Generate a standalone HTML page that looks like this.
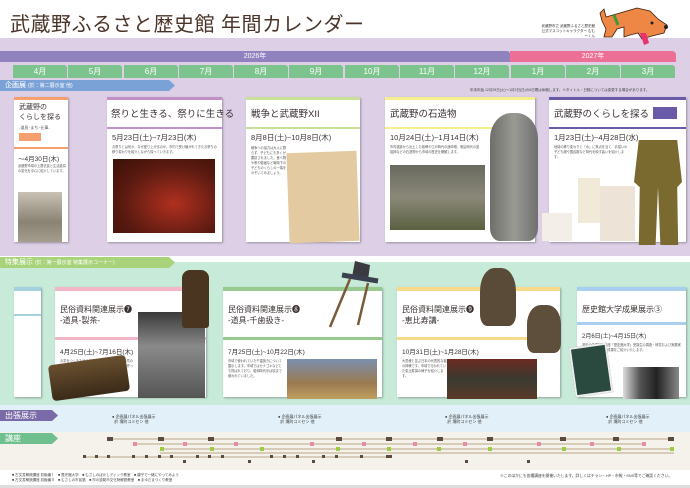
<!DOCTYPE html>
<html><head><meta charset="utf-8"><style>
*{margin:0;padding:0;box-sizing:border-box}
body{width:690px;height:488px;overflow:hidden;background:#fff;font-family:"Liberation Sans","Noto Sans CJK JP",sans-serif;position:relative;color:#3a2e2a}
.a{position:absolute}
.card{position:absolute;background:#fff;box-shadow:1px 1px 2px rgba(0,0,0,.3)}
.t{position:absolute;font-size:9.5px;color:#3a3030;white-space:nowrap}
.d{position:absolute;font-size:7.5px;color:#3a3030;white-space:nowrap}
.s{position:absolute;font-size:3.2px;line-height:5px;color:#555}
.m{position:absolute;top:65px;height:13px;width:54px;background:#7cc38d;color:#fff;font-size:8px;text-align:center;line-height:13px;border-radius:0 3px 0 0}
.lab{position:absolute;height:11px;color:#fff;font-size:7px;line-height:11px;padding-left:5px;clip-path:polygon(0 0,calc(100% - 6px) 0,100% 50%,calc(100% - 6px) 100%,0 100%)}
</style></head><body>
<div class="a" style="left:10px;top:8px;font-size:20px;color:#4a3328;letter-spacing:0.5px;white-space:nowrap">武蔵野ふるさと歴史館 年間カレンダー</div>
<div class="a" style="left:540px;top:24px;font-size:3.5px;color:#333;line-height:5px;text-align:right;width:55px">武蔵野市立 武蔵野ふるさと歴史館<br>公式マスコットキャラクター むむーくん</div>
<div class="a" style="left:0;top:38px;width:690px;height:218px;background:#dccfe6"></div>
<div class="a" style="left:0;top:256px;width:690px;height:6px;background:#fff"></div>
<div class="a" style="left:0;top:262px;width:690px;height:143px;background:#c7ead9"></div>
<div class="a" style="left:0;top:405px;width:690px;height:27px;background:#e2f1f9"></div>
<div class="a" style="left:0;top:432px;width:690px;height:38px;background:#f5f2ec"></div>
<svg class="a" style="left:592px;top:3px" width="80" height="44" viewBox="0 0 80 44">
<path d="M8 10 L12 6 L14 14 L28 10 L45 5 L58 8 L66 16 L75 22 L72 30 L60 33 L50 36 L46 30 L38 32 L32 34 L32 24 L25 26 L20 34 L12 34 L14 26 L10 18 Z" fill="#ee8745" stroke="#3a2010" stroke-width="0.8"/>
<path d="M22 12 L26 22" stroke="#3a9a3a" stroke-width="3"/>
<path d="M48 30 L52 42 L57 40 L54 30 Z" fill="#e8336e"/>
<circle cx="60" cy="20" r="1.5" fill="#222"/><circle cx="74" cy="24" r="2" fill="#222"/>
</svg>
<div class="a" style="left:0;top:51px;width:510px;height:11px;background:#9081bf;color:#fff;font-size:7px;text-align:center;line-height:11px;border-radius:0 3px 0 0">2026年</div>
<div class="a" style="left:510px;top:51px;width:166px;height:11px;background:#ec6f95;color:#fff;font-size:7px;text-align:center;line-height:11px;border-radius:0 4px 0 0">2027年</div>
<div class="m" style="left:13px">4月</div><div class="m" style="left:68px">5月</div><div class="m" style="left:124px">6月</div><div class="m" style="left:179px">7月</div><div class="m" style="left:234px">8月</div><div class="m" style="left:289px">9月</div><div class="m" style="left:345px">10月</div><div class="m" style="left:400px">11月</div><div class="m" style="left:455px">12月</div><div class="m" style="left:511px">1月</div><div class="m" style="left:566px">2月</div><div class="m" style="left:621px">3月</div>
<div class="lab" style="left:0;top:80px;width:175px;background:#7ba2d6">企画展 <span style="font-size:5px">(於：第二展示室 他)</span></div>
<div class="a" style="left:470px;top:88px;font-size:3.5px;color:#444;white-space:nowrap">年末年始 12月29日(火)〜1月3日(日)の6日間は休館します。※タイトル・日程については変更する場合があります。</div>
<div class="card" style="left:14px;top:97px;width:54px;height:145px;border-top:3px solid #f5a06e">
 <div class="t" style="left:5px;top:3px;font-size:7px;line-height:10px">武蔵野の<br>くらしを探る</div>
 <div class="s" style="left:5px;top:25px;font-size:4px">-道具･まち･仕事-</div>
 <div class="a" style="left:5px;top:33px;width:22px;height:8px;background:#f5a06e"></div>
 <div class="a" style="left:0;top:47px;width:54px;height:2px;background:#f5a06e"></div>
 <div class="d" style="left:4px;top:53px;font-size:6.5px">〜4月30日(木)</div>
 <div class="s" style="left:4px;top:64px;width:48px">武蔵野市域の上層农民と生活道具の変化を中心に紹介しています。</div>
 <div class="a" style="left:4px;top:92px;width:44px;height:50px;background:linear-gradient(#c9c2b4,#8a8273 60%,#a59d8d)"></div>
</div>
<div class="card" style="left:107px;top:97px;width:115px;height:145px;border-top:3px solid #c290c6">
 <div class="t" style="left:4px;top:6px">祭りと生きる、祭りに生きる</div>
 <div class="a" style="left:0;top:27px;width:115px;height:2px;background:#c290c6"></div>
 <div class="d" style="left:5px;top:32px">5月23日(土)~7月23日(木)</div>
 <div class="s" style="left:5px;top:45px;width:105px">お祭りとは何か、なぜ盛り上がるのか。市内で受け継がれてきたお祭りの移り変わりを紹介しながら探っていきます。</div>
 <div class="a" style="left:6px;top:59px;width:102px;height:74px;background:radial-gradient(ellipse at 60% 60%,#b03020,#5a1a10 60%,#3a1008)"></div>
</div>
<div class="card" style="left:246px;top:97px;width:114px;height:145px;border-top:3px solid #c8e09a">
 <div class="t" style="left:5px;top:6px">戦争と武蔵野XII</div>
 <div class="a" style="left:0;top:27px;width:114px;height:2px;background:#c8e09a"></div>
 <div class="d" style="left:5px;top:32px">8月8日(土)~10月8日(木)</div>
 <div class="s" style="left:5px;top:46px;width:36px">戦争への協力は大人に限らず、子どもにも多くが要請されました。食べ物や歌や動画など戦時下の子どものくらしの一端をのぞいてみましょう。</div>
 <div class="a" style="left:42px;top:52px;width:70px;height:90px;background:#e4caa0;transform:rotate(-2deg)"></div>
</div>
<div class="card" style="left:385px;top:97px;width:150px;height:145px;border-top:3px solid #f5ef8e">
 <div class="t" style="left:5px;top:6px">武蔵野の石造物</div>
 <div class="a" style="left:0;top:27px;width:150px;height:2px;background:#f5ef8e"></div>
 <div class="d" style="left:5px;top:32px">10月24日(土)~1月14日(木)</div>
 <div class="s" style="left:5px;top:45px;width:90px">市内遺跡から出土した板碑や江戸時代の庚申塔、明治時代の道祖神などの石造物から市域の歴史を概観します。</div>
 <div class="a" style="left:5px;top:65px;width:95px;height:65px;background:linear-gradient(#6a6a60,#8a8878 50%,#5a6040)"></div>
</div>
<div class="a" style="left:490px;top:113px;width:48px;height:128px;background:linear-gradient(90deg,#6e6e6a,#9a9a94,#707070);border-radius:45% 45% 20% 20%/20% 20% 10% 10%"></div>
<div class="card" style="left:549px;top:97px;width:137px;height:145px;border-top:3px solid #6a5ba8">
 <div class="t" style="left:5px;top:6px">武蔵野のくらしを探る</div>
 <div class="a" style="left:104px;top:7px;width:24px;height:12px;background:#6a5ba8"></div>
 <div class="a" style="left:0;top:27px;width:137px;height:2px;background:#6a5ba8"></div>
 <div class="d" style="left:5px;top:32px">1月23日(土)~4月28日(水)</div>
 <div class="s" style="left:5px;top:45px;width:75px">地域の移り変わりと「水」に焦点を当て、手描いの子ども服や国民服など時代を映す装いを紹介します。</div>
</div>
<div class="a" style="left:634px;top:140px;width:48px;height:105px;background:#7a6a30;clip-path:polygon(10% 0,90% 0,100% 40%,90% 45%,92% 100%,55% 100%,50% 45%,45% 100%,10% 100%,12% 45%,0 40%)"></div>
<div class="a" style="left:600px;top:186px;width:35px;height:55px;background:#ede3d6"></div>
<div class="a" style="left:578px;top:178px;width:22px;height:45px;background:#f1ead9"></div>
<div class="a" style="left:542px;top:213px;width:30px;height:28px;background:#f3efe8"></div>
<div class="lab" style="left:0;top:257px;width:175px;background:#a8d37a">特集展示 <span style="font-size:5px">(於：第一展示室 特集展示コーナー)</span></div>
<div class="card" style="left:14px;top:287px;width:27px;height:110px;border-top:4px solid #a3d1de"><div class="a" style="left:0;top:23px;width:27px;height:2px;background:#a3d1de"></div></div>
<div class="card" style="left:55px;top:287px;width:151px;height:110px;border-top:4px solid #f2b6c6">
 <div class="t" style="left:5px;top:13px;font-size:8px;line-height:11px">民俗資料関連展示❼<br>-道具-製茶-</div>
 <div class="a" style="left:0;top:46px;width:151px;height:3px;background:#f2b6c6"></div>
 <div class="d" style="left:5px;top:55px;font-size:6.5px">4月25日(土)~7月16日(木)</div>
 <div class="s" style="left:5px;top:68px;width:75px">お茶をつくるための道具を紹介します。関前や境の方の語りによると、昭和の終わり頃までお茶を作っていたようです。</div>
 <div class="a" style="left:83px;top:21px;width:67px;height:86px;background:linear-gradient(#3a3a3a,#8a8a8a 40%,#555)"></div>
</div>
<div class="a" style="left:182px;top:270px;width:27px;height:58px;background:#4a3520;border-radius:8px 8px 3px 3px"></div>
<div class="a" style="left:50px;top:360px;width:78px;height:36px;background:linear-gradient(#6a5030,#3a2a18);transform:rotate(-8deg);border-radius:4px"></div>
<div class="card" style="left:223px;top:287px;width:159px;height:110px;border-top:4px solid #98c98e">
 <div class="t" style="left:5px;top:13px;font-size:8px;line-height:11px">民俗資料関連展示❽<br>-道具-千歯扱き-</div>
 <div class="a" style="left:0;top:46px;width:159px;height:3px;background:#98c98e"></div>
 <div class="d" style="left:5px;top:55px;font-size:6.5px">7月25日(土)~10月22日(木)</div>
 <div class="s" style="left:5px;top:68px;width:55px">市域で使われていた千歯扱きについて展示します。市域ではカナゴキなどとも呼ばれており、昭和時代半ば頃まで使われていました。</div>
 <div class="a" style="left:64px;top:68px;width:90px;height:40px;background:linear-gradient(#7a90b0,#9a7a50 60%,#c0a060)"></div>
</div>
<svg class="a" style="left:320px;top:255px" width="70" height="75"><path d="M35 6 L50 10 L48 25 L32 22 Z" fill="#3a3a40"/><path d="M22 20 L58 26" stroke="#3a4050" stroke-width="5"/><path d="M30 24 L10 72 M48 28 L38 70" stroke="#7a5a38" stroke-width="2.5"/></svg>
<div class="card" style="left:397px;top:287px;width:163px;height:110px;border-top:4px solid #f9d98a">
 <div class="t" style="left:5px;top:13px;font-size:8px;line-height:11px">民俗資料関連展示❾<br>-恵比寿講-</div>
 <div class="a" style="left:0;top:46px;width:163px;height:3px;background:#f9d98a"></div>
 <div class="d" style="left:5px;top:55px;font-size:6.5px">10月31日(土)~1月28日(木)</div>
 <div class="s" style="left:5px;top:68px;width:45px">大黒様と並ぶ日本の代表的な福の神様です。市域で行われていた恵比寿講の様子を紹介します。</div>
 <div class="a" style="left:50px;top:68px;width:90px;height:40px;background:linear-gradient(#6a2a20,#3a3a30 50%,#5a3a2a)"></div>
</div>
<div class="a" style="left:480px;top:268px;width:36px;height:58px;background:#5a4a38;border-radius:40% 40% 20% 20%"></div>
<div class="a" style="left:527px;top:305px;width:34px;height:48px;background:#5e4e3c;border-radius:40% 40% 20% 20%"></div>
<div class="card" style="left:577px;top:287px;width:109px;height:110px;border-top:4px solid #a8cff0">
 <div class="t" style="left:5px;top:13px;font-size:8px">歴史館大学成果展示③</div>
 <div class="a" style="left:0;top:31px;width:109px;height:3px;background:#a8cff0"></div>
 <div class="d" style="left:5px;top:40px;font-size:6px">2月6日(土)~4月15日(木)</div>
 <div class="s" style="left:5px;top:52px;width:100px">過年の生涯学習講座「歴史館大学」受講生の調査・研究および実務実習を通して学びの成果をご紹介いたします。</div>
 <div class="a" style="left:46px;top:76px;width:56px;height:32px;background:linear-gradient(90deg,#ddd,#555 30%,#222 60%,#888)"></div>
</div>
<div class="a" style="left:572px;top:345px;width:38px;height:50px;background:#2a4a40;transform:rotate(-8deg);border:2px solid #eee"></div>
<div class="lab" style="left:0;top:410px;width:58px;background:#7a6aa8;font-size:8px">出張展示</div>
<div class="a" style="left:112px;top:414px;font-size:4px;color:#333;line-height:5px">● 企画展パネル出張展示<br>&nbsp;&nbsp;於 境町コミセン 他</div>
<div class="a" style="left:278px;top:414px;font-size:4px;color:#333;line-height:5px">● 企画展パネル出張展示<br>&nbsp;&nbsp;於 境町コミセン 他</div>
<div class="a" style="left:445px;top:414px;font-size:4px;color:#333;line-height:5px">● 企画展パネル出張展示<br>&nbsp;&nbsp;於 境町コミセン 他</div>
<div class="a" style="left:606px;top:414px;font-size:4px;color:#333;line-height:5px">● 企画展パネル出張展示<br>&nbsp;&nbsp;於 境町コミセン 他</div>
<div class="lab" style="left:0;top:433px;width:58px;background:#6fc08e;font-size:8px">講座</div>
<svg class="a" style="left:0;top:432px" width="690" height="40">
<g stroke="#d6ccb8" stroke-width="2">
<line x1="107" y1="7" x2="674" y2="7"/><line x1="133" y1="12" x2="645" y2="12"/><line x1="160" y1="17" x2="674" y2="17"/><line x1="160" y1="21" x2="674" y2="21"/><line x1="83" y1="25" x2="392" y2="25"/></g>
<g fill="#5a4a40">
<rect x="107" y="5" width="6" height="4"/><rect x="158" y="5" width="6" height="4"/><rect x="208" y="5" width="6" height="4"/><rect x="336" y="5" width="6" height="4"/><rect x="386" y="5" width="6" height="4"/><rect x="437" y="5" width="6" height="4"/><rect x="487" y="5" width="6" height="4"/><rect x="560" y="5" width="6" height="4"/><rect x="613" y="5" width="6" height="4"/><rect x="668" y="5" width="6" height="4"/>
<rect x="133" y="10" width="4" height="4" fill="#e88aa8"/><rect x="183" y="10" width="4" height="4" fill="#e88aa8"/><rect x="234" y="10" width="4" height="4" fill="#e88aa8"/><rect x="310" y="10" width="4" height="4" fill="#e88aa8"/><rect x="362" y="10" width="4" height="4" fill="#e88aa8"/><rect x="413" y="10" width="4" height="4" fill="#e88aa8"/><rect x="463" y="10" width="4" height="4" fill="#e88aa8"/><rect x="537" y="10" width="4" height="4" fill="#e88aa8"/><rect x="590" y="10" width="4" height="4" fill="#e88aa8"/><rect x="642" y="10" width="4" height="4" fill="#e88aa8"/>
<rect x="160" y="15" width="4" height="4" fill="#9ccc40"/><rect x="210" y="15" width="4" height="4" fill="#9ccc40"/><rect x="260" y="15" width="4" height="4" fill="#9ccc40"/><rect x="336" y="15" width="4" height="4" fill="#9ccc40"/><rect x="387" y="15" width="4" height="4" fill="#9ccc40"/><rect x="437" y="15" width="4" height="4" fill="#9ccc40"/><rect x="488" y="15" width="4" height="4" fill="#9ccc40"/><rect x="562" y="15" width="4" height="4" fill="#9ccc40"/><rect x="617" y="15" width="4" height="4" fill="#9ccc40"/><rect x="670" y="15" width="4" height="4" fill="#9ccc40"/>
<rect x="83" y="23" width="3" height="3"/><rect x="95" y="23" width="3" height="3"/><rect x="107" y="23" width="3" height="3"/><rect x="132" y="23" width="3" height="3"/><rect x="145" y="23" width="3" height="3"/><rect x="158" y="23" width="3" height="3"/><rect x="170" y="23" width="3" height="3"/><rect x="196" y="23" width="3" height="3"/><rect x="208" y="23" width="3" height="3"/><rect x="221" y="23" width="3" height="3"/><rect x="270" y="23" width="3" height="3"/><rect x="283" y="23" width="3" height="3"/><rect x="296" y="23" width="3" height="3"/><rect x="322" y="23" width="3" height="3"/><rect x="335" y="23" width="3" height="3"/><rect x="360" y="23" width="3" height="3"/><rect x="386" y="23" width="6" height="3"/>
<rect x="183" y="28" width="3" height="3"/><rect x="248" y="28" width="3" height="3"/><rect x="312" y="28" width="3" height="3"/><rect x="465" y="28" width="3" height="3"/><rect x="527" y="28" width="3" height="3"/></g>
</svg>
<div class="a" style="left:12px;top:473px;font-size:3.5px;color:#444;line-height:5px;white-space:nowrap">■ 古文書解読講座 初級編Ⅰ　■ 歴史館大学　■ むさしのぽかしディック教室　■ 親子で一緒にやってみよう<br>■ 古文書解読講座 初級編Ⅱ　■ むさしの市民塾　■ 市の遺跡市文化財解説教室　■ まゆだまづくり教室</div>
<div class="a" style="left:500px;top:474px;font-size:3.8px;color:#444;white-space:nowrap">※このほかにも各種講座を開催いたします。詳しくはチラシ・HP・市報・SNS等でご確認ください。</div>
<div class="a" style="left:0;top:485px;width:690px;height:3px;background:#ddd"></div>
</body></html>
